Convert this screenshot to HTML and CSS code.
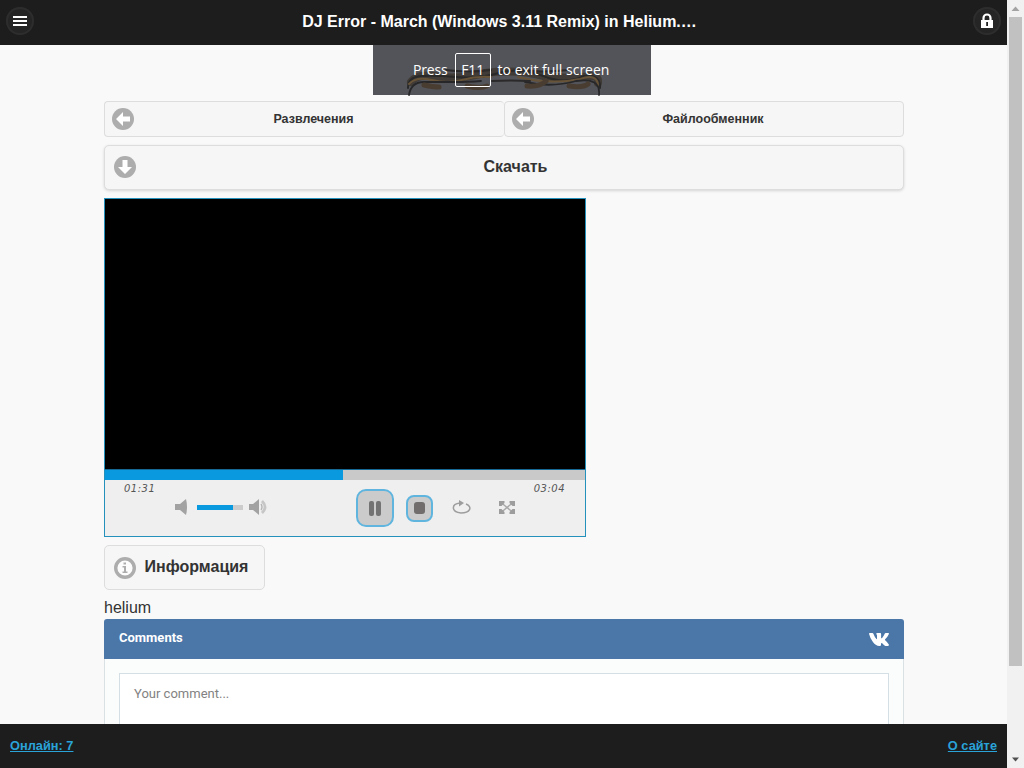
FILE: index.html
```html
<!DOCTYPE html>
<html lang="ru">
<head>
<meta charset="utf-8">
<title>DJ Error - March (Windows 3.11 Remix) in Helium</title>
<link rel="stylesheet" href="styles.css">
</head>
<body>
<div class="app">
  <header class="header">
    <a class="round"><svg width="28" height="28" viewBox="0 0 28 28"><path fill="#fff" d="M7 9h14v2H7zM7 13h14v2H7zM7 17h14v2H7z"/></svg></a>
    <h1 class="title">DJ Error - March (Windows 3.11 Remix) in Helium.…</h1>
    <a class="round"><svg width="28" height="28" viewBox="0 0 28 28"><path fill="none" stroke="#fff" stroke-width="2.2" d="M10.500 13.500v-2.500a3.500 3.500 0 0 1 7 0V13.500"/><path fill="#fff" d="M8 13h12v8H8z"/><path fill="#222" d="M13.200 15h1.800v4h-1.800z"/></svg></a>
  </header>

  <main class="main">
    <div class="banner"></div>
    <nav class="pair">
      <a class="btn small"><svg class="ico" width="22" height="22" viewBox="0 0 22 22"><circle cx="11" cy="11" r="11" fill="#adadad"/><path fill="#fff" d="M4 11l7-7v4.500h7v5h-7V18z"/></svg><span>Развлечения</span></a>
      <a class="btn small"><svg class="ico" width="22" height="22" viewBox="0 0 22 22"><circle cx="11" cy="11" r="11" fill="#adadad"/><path fill="#fff" d="M4 11l7-7v4.500h7v5h-7V18z"/></svg><span>Файлообменник</span></a>
    </nav>
    <a class="btn large"><svg class="ico" width="22" height="22" viewBox="0 0 22 22"><circle cx="11" cy="11" r="11" fill="#adadad"/><path fill="#fff" d="M11 18l-7-7h4.500V4h5v7H18z"/></svg><span>Скачать</span></a>

    <section class="player">
      <div class="screen"></div>
      <div class="progress"><div class="played"></div></div>
      <div class="panel">
        <div class="times"><span>01:31</span><span>03:04</span></div>
        <div class="controls">
          <svg class="mute" width="13" height="16" viewBox="0 0 13 16"><path fill="#a2a2a2" d="M0 5h5l6-5q2 8 0 16l-6-5H0z"/></svg>
          <div class="volume"><div class="level"></div></div>
          <svg class="loud" width="20" height="16" viewBox="0 0 20 16"><path fill="#a2a2a2" d="M0 5h4l6-5v16l-6-5H0z"/><path fill="none" stroke="#b5b5b5" stroke-width="1.400" d="M12 5q2 3 0 6"/><path fill="none" stroke="#c6c6c6" stroke-width="2.800" d="M13 2q6 6 0 12"/></svg>
          <div class="key pause"><svg width="14" height="16" viewBox="0 0 14 16"><rect x="1" y="1" width="5" height="15" rx="2" fill="#737373"/><rect x="8" y="1" width="5" height="15" rx="2" fill="#737373"/></svg></div>
          <div class="key stop"><svg width="11" height="12" viewBox="0 0 11 12"><rect width="11" height="12" rx="3" y="0" fill="#706d6c"/></svg></div>
          <svg class="repeat" width="20" height="14" viewBox="0 0 20 14"><path fill="none" stroke="#9d9d9d" stroke-width="1.500" d="M8 3C-1 4-1 12 9 13c9 0 12-6 5-9"/><path fill="#9d9d9d" d="M7 0l5 3-5 3.500z"/></svg>
          <svg class="expand" width="16" height="13" viewBox="0 0 16 13"><path stroke="#a8a8a8" stroke-width="1.400" d="M2 1.500l12 10M14 1.500l-12 10"/><path fill="#9d9d9d" d="M0 0h5.500v2L2.500 5H0zM16 0h-5.500v2l3 3H16zM0 13h5.500v-2l-3-3H0zM16 13h-5.500v-2l3-3H16z"/></svg>
        </div>
      </div>
    </section>

    <a class="btn info"><svg class="ico" width="22" height="22" viewBox="0 0 22 22"><circle cx="11" cy="11" r="9.300" fill="#fcfcfc" stroke="#adadad" stroke-width="3.400"/><path fill="#adadad" d="M9.500 5.500h2.500v2H9.500zM8.500 9H12v5.500h1.500V16h-5v-1.500H10v-4H8.500z"/></svg><span>Информация</span></a>
    <p class="desc">helium</p>

    <section class="comments">
      <div class="chead"><span>Comments</span><svg width="20" height="13" viewBox="0 0 20 13"><path fill="#fff" d="M0 .8Q0 0 .8 0h2.600q.7 0 1 .8 1.300 3.500 3 5.200.6.500.6-.6V2.500Q8 1 7 .9 7.500 0 8.500 0h2.800q.8 0 .8.900v3.800q.2 1 1 .2Q14.800 3 15.700.8 16 0 16.800 0h2.500q1 0 .6 1-1 2.500-3.800 5.300-.3.400.1.900 2.400 2.200 3.600 4.200.5 1.300-.8 1.500h-2.600q-.8 0-1.500-.8-1.600-1.900-2.400-2.100-.5 0-.5.800v1.200q0 1-1.200 1-4.200.1-7.200-4.500Q1 5 0 .8z"/></svg></div>
      <div class="cbody"><div class="field">Your comment...</div></div>
    </section>
  </main>

  <footer class="footer"><a>Онлайн: 7</a><a>О сайте</a></footer>
</div>

<aside class="scroll">
  <svg width="17" height="17" viewBox="0 0 17 17"><path fill="#a3a3a3" d="M4.500 11l4-4.500 4 4.500z"/></svg>
  <div class="thumb"></div>
  <svg class="down" width="17" height="17" viewBox="0 0 17 17"><path fill="#505050" d="M5 6.500h7l-3.500 4z"/></svg>
</aside>

<div class="toast">
  <svg class="ribbon" width="278" height="54" viewBox="0 0 278 54">
    <g fill="none" stroke-linecap="round">
      <path stroke="#403b36" stroke-width="8" d="M38 37Q44 29 60 31Q85 35 112 28Q145 24 170 31Q200 34 216 31Q226 30 225 38"/>
      <path stroke="#29292a" stroke-width="2" d="M35 43Q35 32 48 31T83 32T126 28T170 31T211 31Q228 29 227 43"/>
      <path stroke="#665338" stroke-width="2" d="M36 39Q43 31 59 35T89 35T118 32M145 32Q177 40 207 34Q224 28 225 40"/>
      <path stroke="#272729" stroke-width="1.800" d="M36 50Q38 37 51 37T80 37T108 36M152 37Q178 43 203 36Q228 32 226 50"/>
      <path stroke="#493d32" stroke-width="5" d="M51 40Q60 42 66 42M94 41Q107 44 114 41M154 41Q167 42 173 36M196 41Q210 43 215 39"/>
      <path stroke="#2b292a" stroke-width="2" d="M73 25Q94 28 118 25M145 25Q170 28 195 25M119 36Q138 35 157 36"/>
    </g>
  </svg>
  <span>Press</span><kbd class="f11">F11</kbd><span class="rest">to exit full screen</span>
</div>
</body>
</html>
```
FILE: styles.css
```css
* { box-sizing: border-box; }
body {
  margin: 0;
  width: 1024px;
  height: 768px;
  display: flex;
  position: relative;
  overflow: hidden;
  background: #f9f9f9;
  color: #333;
  font: 16px/1.3 "Liberation Sans", Arial, sans-serif;
}
svg { display: block; flex: none; }
.app { width: 1007px; display: flex; flex-direction: column; }
.header {
  height: 45px;
  flex: none;
  display: flex;
  justify-content: space-between;
  align-items: flex-start;
  padding: 7px 6px;
  background: #1d1d1d;
}
.round {
  width: 28px;
  height: 28px;
  border-radius: 50%;
  background: #252525;
  box-shadow: inset 0 0 0 2px #2d2d2d;
}
.title {
  margin: 4px 0 0;
  padding-right: 8px;
  font-size: 16px;
  line-height: 21px;
  color: #fff;
  white-space: nowrap;
}
.main {
  height: 679px;
  flex: none;
  overflow: hidden;
  padding: 0 103px 0 104px;
}
.banner { height: 56px; }
.pair { display: flex; height: 36px; }
.btn {
  display: flex;
  align-items: center;
  border: 1px solid #ddd;
  border-radius: 5px;
  background: #f6f6f6;
  font-weight: bold;
  text-shadow: 0 1px 0 #f3f3f3;
}
.btn span { flex: 1; text-align: center; }
.small { width: 400px; padding: 0 11px 0 7px; font-size: 12.5px; border-radius: 4px; }
.small:first-child { border-right: 0; }
.small span { padding-top: 1px; }
.large { height: 45px; margin-top: 8px; padding: 0 8px 0 9px; box-shadow: 0 1px 3px rgba(0, 0, 0, .15); }
.large .ico { margin-bottom: 1px; }
.player {
  width: 482px;
  height: 339px;
  margin-top: 8px;
  border: 1px solid #2491bd;
  display: flex;
  flex-direction: column;
}
.screen { height: 271px; background: #000; border-bottom: 1px solid #146995; }
.progress { height: 10px; background: #c9c9c9; }
.played { width: 238px; height: 10px; background: #0899df; }
.panel { flex: 1; background: #efefef; }
.times {
  display: flex;
  justify-content: space-between;
  height: 9px;
  padding: 3px 20px 0 19px;
  font: italic 10px/12px "DejaVu Sans", sans-serif;
  letter-spacing: .5px;
  color: #555;
}
.controls { display: flex; align-items: center; height: 38px; padding-left: 70px; }
.mute, .volume, .loud, .repeat, .expand { margin-bottom: 2px; }
.mute { width: 13px; }
.volume { width: 46px; height: 5px; margin-left: 9px; background: #ccc; }
.level { width: 36px; height: 5px; background: #0899df; }
.loud { margin-left: 6px; }
.key {
  display: flex;
  align-items: center;
  justify-content: center;
  flex: none;
  background: #cbcbcb;
  border: 2px solid #60b5df;
}
.pause { width: 38px; height: 38px; margin-left: 87px; border-radius: 10px; }
.stop { width: 27px; height: 27px; margin-left: 12px; border-radius: 8px; }
.repeat { margin-left: 19px; }
.expand { margin-left: 27px; }
.info { width: 161px; height: 45px; margin-top: 8px; padding: 0 7px 0 9px; }
.desc { margin: 7px 0 0; height: 22px; line-height: 21px; }
.comments { height: 120px; font-family: Roboto, sans-serif; font-size: 13px; }
.chead {
  height: 40px;
  display: flex;
  align-items: center;
  justify-content: space-between;
  padding: 0 15px;
  border-radius: 3px 3px 0 0;
  background: #4a76a8;
  color: #fff;
  font-weight: bold;
}
.chead span { padding-bottom: 2px; }
.cbody { height: 80px; padding: 14px 14px 0; background: #fbfcfc; border: solid #d9e1e5; border-width: 0 1px; }
.field { height: 80px; padding: 12px 14px; background: #fff; border: 1px solid #d3dfe5; color: #828282; }
.footer {
  height: 44px;
  display: flex;
  align-items: center;
  justify-content: space-between;
  padding: 1px 10px 0;
  background: #1d1d1d;
  font-size: 12.8px;
  font-weight: bold;
}
.footer a { color: #2aa3d8; text-decoration: underline; }
.scroll { width: 17px; height: 768px; display: flex; flex-direction: column; align-items: center; background: #f1f1f1; }
.thumb { width: 13px; height: 649px; background: #c1c1c1; }
.down { margin-top: auto; }
.toast {
  position: absolute;
  left: 373px;
  top: 45px;
  width: 278px;
  height: 50px;
  display: flex;
  align-items: center;
  padding-left: 40px;
  background: #535459;
  color: #fff;
  font: 14px/20px "Open Sans", "Noto Sans", sans-serif;
  letter-spacing: -.15px;
}
.ribbon { position: absolute; left: 0; top: 0; }
.toast span, .f11 { position: relative; white-space: nowrap; }
.rest { letter-spacing: 0; }
.f11 {
  width: 36px;
  height: 34px;
  margin: 0 7px;
  border: 1px solid #fff;
  border-radius: 2px;
  font: inherit;
  line-height: 32px;
  text-align: center;
}
```
